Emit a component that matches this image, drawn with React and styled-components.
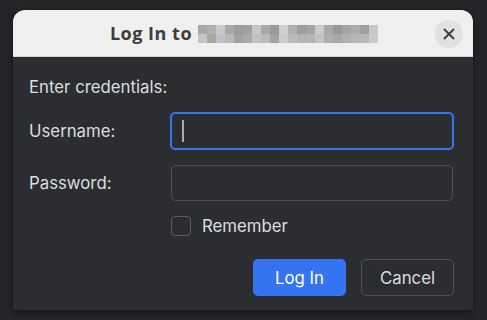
import React, { useState } from 'react';
import styled, { createGlobalStyle } from 'styled-components';

const GlobalStyle = createGlobalStyle`
  html, body {
    margin: 0;
    padding: 0;
    background: #242528;
  }
  * {
    box-sizing: border-box;
  }
`;

const Screen = styled.div`
  width: 487px;
  height: 320px;
  padding: 10px 14px 0 13px;
  background: #242528;
  font-family: Inter, 'Noto Sans', sans-serif;
`;

const Dialog = styled.div`
  width: 460px;
  height: 300px;
  display: flex;
  flex-direction: column;
  border-radius: 12px 12px 0 0;
  overflow: hidden;
  background: #2b2d30;
  box-shadow: 0 2px 6px rgba(0, 0, 0, 0.45);
`;

const TitleBar = styled.div`
  height: 47px;
  flex-shrink: 0;
  display: flex;
  align-items: center;
  justify-content: center;
  position: relative;
  background: #efefef;
  border-bottom: 1px solid #d4d4d4;
`;

const Title = styled.div`
  display: flex;
  align-items: center;
  gap: 6px;
  margin-left: 2px;
  font-family: 'Open Sans', 'DejaVu Sans', sans-serif;
  font-weight: 700;
  font-size: 18px;
  letter-spacing: 0.5px;
  color: #3c3c3c;
`;

const Pixels = styled.div`
  display: grid;
  grid-template-columns: repeat(20, 9px);
  grid-template-rows: 9px 9px;
  margin-top: 2px;
`;

const Pixel = styled.span`
  background: ${p => p.$c};
`;

const CloseButton = styled.button`
  position: absolute;
  right: 10px;
  top: 10px;
  width: 28px;
  height: 28px;
  border-radius: 50%;
  border: none;
  padding: 0;
  background: #e1e1e1;
  display: flex;
  align-items: center;
  justify-content: center;
`;

const Body = styled.div`
  flex: 1;
  padding: 20px 19px 0 16px;
  display: flex;
  flex-direction: column;
  color: #dcdee2;
  font-size: 16.8px;
`;

const Heading = styled.div`
  height: 20px;
  line-height: 20px;
`;

const Row = styled.div`
  display: grid;
  grid-template-columns: 141px 1fr;
  align-items: center;
  margin-top: 15px;
`;

const Label = styled.label`
  line-height: 20px;
`;

const FieldWrap = styled.div`
  position: relative;
  height: ${p => (p.$focused ? 38 : 36)}px;
  margin-left: ${p => (p.$focused ? 0 : 1)}px;
  margin-right: ${p => (p.$focused ? 0 : 1)}px;
`;

const Field = styled.input`
  width: 100%;
  height: 100%;
  border-radius: 5px;
  background: #2b2d30;
  color: #dfe1e5;
  font-family: inherit;
  font-size: 16px;
  padding: 0 12px;
  outline: none;
  border: ${p => (p.$focused ? '2px solid #3574f0' : '1px solid #4e5157')};
  caret-color: transparent;
`;

const Caret = styled.span`
  position: absolute;
  left: 12px;
  top: 8px;
  width: 2px;
  height: 22px;
  background: #a8abb0;
`;

const CheckRow = styled.div`
  display: flex;
  align-items: center;
  gap: 11px;
  height: 20px;
  margin: 15px 0 0 142px;
`;

const Box = styled.span`
  width: 20px;
  height: 20px;
  border: 1px solid #5a5d63;
  border-radius: 4px;
`;

const Buttons = styled.div`
  display: flex;
  justify-content: flex-end;
  gap: 15px;
  margin-top: 23px;
`;

const Button = styled.button`
  width: 93px;
  height: 37px;
  border-radius: 5px;
  font-family: inherit;
  font-size: 16.8px;
  color: ${p => (p.$primary ? '#ffffff' : '#dcdee2')};
  background: ${p => (p.$primary ? '#3574f0' : '#2b2d30')};
  border: ${p => (p.$primary ? 'none' : '1px solid #4e5157')};
`;

const top = ['#aaa7a4', '#b3b1af', '#c6c9cd', '#a9a6a3', '#9e9b98', '#a29f9c', '#c4c7cb', '#a9a8a7', '#9d9994', '#cdd0d3', '#b1b1b1', '#9d9d9c', '#a7a5a3', '#c9cbcc', '#a9a9a9', '#99999b', '#a6a4a2', '#aeaba8', '#9f9f9f', '#c5c9cd'];
const bottom = ['#c3c5c7', '#aaa6a2', '#c0c3c6', '#b8b9ba', '#a4a19e', '#adaaa6', '#c0c3c6', '#bdbbb8', '#a7a4a0', '#c8cbcd', '#bcbcbb', '#b3b3b1', '#b6b5b3', '#c3c4c4', '#aeaeae', '#a8a8a9', '#b1afad', '#b9b7b4', '#b7b8b8', '#c8cbcf'];

function App() {
  const [user, setUser] = useState('');
  const [pass, setPass] = useState('');

  return (
    <Screen>
      <GlobalStyle />
      <Dialog>
        <TitleBar>
          <Title>
            Log In to
            <Pixels>
              {[...top, ...bottom].map((c, i) => (
                <Pixel key={i} $c={c} />
              ))}
            </Pixels>
          </Title>
          <CloseButton>
            <svg width="12" height="12" viewBox="0 0 12 12">
              <path d="M1.5 1.5l9 9M10.5 1.5l-9 9" stroke="#3a3a3a" strokeWidth="1.8" strokeLinecap="round" />
            </svg>
          </CloseButton>
        </TitleBar>
        <Body>
          <Heading>Enter credentials:</Heading>
          <Row>
            <Label>Username:</Label>
            <FieldWrap $focused>
              <Field $focused value={user} onChange={e => setUser(e.target.value)} />
              {!user && <Caret />}
            </FieldWrap>
          </Row>
          <Row>
            <Label>Password:</Label>
            <FieldWrap>
              <Field type="password" value={pass} onChange={e => setPass(e.target.value)} />
            </FieldWrap>
          </Row>
          <CheckRow>
            <Box />
            Remember
          </CheckRow>
          <Buttons>
            <Button $primary>Log In</Button>
            <Button>Cancel</Button>
          </Buttons>
        </Body>
      </Dialog>
    </Screen>
  );
}

export default App;
